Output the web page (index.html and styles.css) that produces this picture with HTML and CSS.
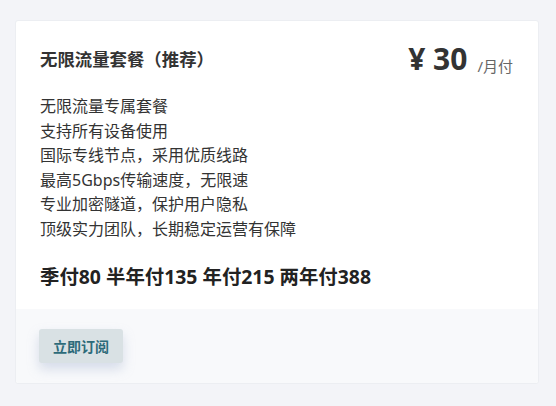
FILE: index.html
```html
<!DOCTYPE html>
<html lang="zh">
<head>
<meta charset="utf-8">
<link rel="stylesheet" href="styles.css">
</head>
<body>
<div class="list">
  <div class="card">
    <div class="card-body">
      <div class="head">
        <h3 class="title">无限流量套餐（推荐）</h3>
        <div class="price"><span class="amount">¥ 30</span><span class="unit">/月付</span></div>
      </div>
      <ul class="features">
        <li>无限流量专属套餐</li>
        <li>支持所有设备使用</li>
        <li>国际专线节点，采用优质线路</li>
        <li>最高5Gbps传输速度，无限速</li>
        <li>专业加密隧道，保护用户隐私</li>
        <li>顶级实力团队，长期稳定运营有保障</li>
      </ul>
      <div class="plans">季付80 半年付135 年付215 两年付388</div>
    </div>
    <div class="card-footer">
      <button class="btn">立即订阅</button>
    </div>
  </div>
  <div class="card"></div>
</div>
</body>
</html>
```
FILE: styles.css
```css
html, body {
  margin: 0;
  padding: 0;
  background: #f3f4f8;
  font-family: "Noto Sans", "Noto Sans CJK SC", sans-serif;
  color: #333;
  overflow: hidden;
}
.list {
  display: flex;
  flex-direction: column;
  gap: 22px;
  padding: 20px 17px 0 15px;
}
.card {
  background: #fff;
  border: 1px solid #eceef2;
  border-radius: 3px;
  min-height: 60px;
}
.card-body {
  padding: 17px 24px 19px 24px;
}
.head {
  display: flex;
  justify-content: space-between;
  align-items: center;
}
.title {
  margin: 0;
  font-size: 17.4px;
  font-weight: 700;
  color: #333;
}
.price {
  display: flex;
  align-items: baseline;
  gap: 10px;
  padding-right: 1px;
}
.amount {
  font-size: 30px;
  font-weight: 700;
  color: #333;
}
.unit {
  font-size: 15px;
  color: #666;
  position: relative;
  top: 2px;
}
.features {
  list-style: none;
  margin: 15px 0 0 0;
  padding: 0;
  font-size: 16px;
  line-height: 24.5px;
  color: #333;
}
.plans {
  margin-top: 20px;
  font-size: 19.4px;
  font-weight: 700;
  color: #222;
}
.card-footer {
  background: #f8f9fb;
  padding: 20px 24px 20px 23px;
  border-radius: 0 0 3px 3px;
}
.btn {
  font-family: inherit;
  font-size: 14px;
  font-weight: 700;
  color: #2d6b7a;
  background: #d9e1e4;
  border: none;
  border-radius: 3px;
  height: 34px;
  width: 84px;
  box-shadow: 0 6px 12px rgba(150, 165, 200, 0.35);
  cursor: pointer;
}
```
